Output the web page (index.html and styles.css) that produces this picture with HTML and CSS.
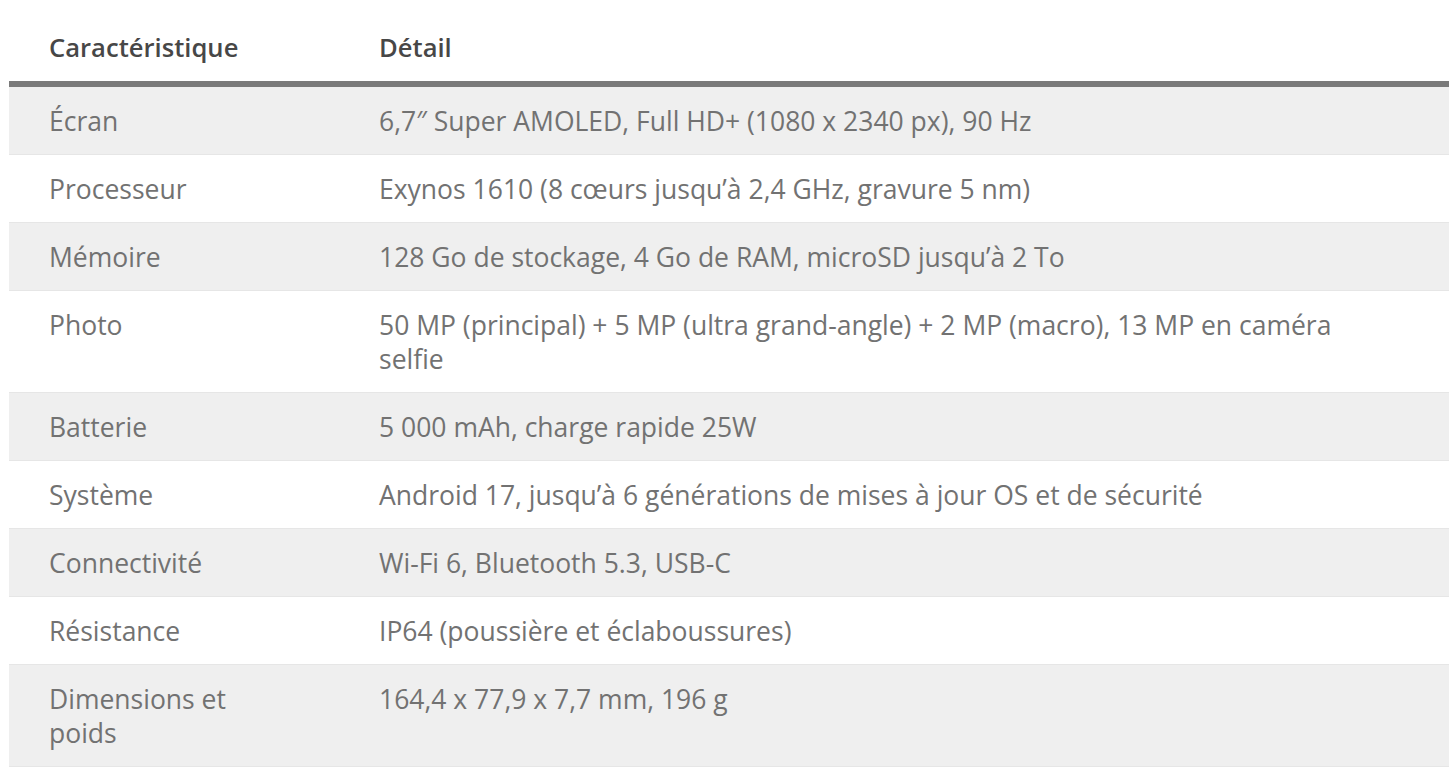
FILE: index.html
```html
<!DOCTYPE html>
<html lang="fr">
<head>
<meta charset="utf-8">
<title>Caractéristiques</title>
<link rel="stylesheet" href="styles.css">
</head>
<body>
<div class="wrap">
<table class="specs">
<thead>
<tr><th class="c1">Caractéristique</th><th class="c2">Détail</th></tr>
</thead>
<tbody>
<tr><td class="k">Écran</td><td class="v">6,7″ Super AMOLED, Full HD+ (1080 x 2340 px), 90 Hz</td></tr>
<tr><td class="k">Processeur</td><td class="v">Exynos 1610 (8 cœurs jusqu’à 2,4 GHz, gravure 5 nm)</td></tr>
<tr><td class="k">Mémoire</td><td class="v">128 Go de stockage, 4 Go de RAM, microSD jusqu’à 2 To</td></tr>
<tr><td class="k">Photo</td><td class="v">50 MP (principal) + 5 MP (ultra grand-angle) + 2 MP (macro), 13 MP en caméra selfie</td></tr>
<tr><td class="k">Batterie</td><td class="v">5 000 mAh, charge rapide 25W</td></tr>
<tr><td class="k">Système</td><td class="v">Android 17, jusqu’à 6 générations de mises à jour OS et de sécurité</td></tr>
<tr><td class="k">Connectivité</td><td class="v">Wi-Fi 6, Bluetooth 5.3, USB-C</td></tr>
<tr><td class="k">Résistance</td><td class="v">IP64 (poussière et éclaboussures)</td></tr>
<tr><td class="k">Dimensions et poids</td><td class="v">164,4 x 77,9 x 7,7 mm, 196 g</td></tr>
</tbody>
</table>
</div>
</body>
</html>
```
FILE: styles.css
```css
html, body {
  margin: 0;
  padding: 0;
  background: #ffffff;
}
.wrap {
  padding: 8px 0 0 9px;
}
.specs {
  width: 1440px;
  border-collapse: collapse;
  table-layout: fixed;
  font-family: "Open Sans", "Noto Sans", sans-serif;
  font-size: 26.5px;
  line-height: 34px;
}
.specs th {
  text-align: left;
  font-weight: 600;
  font-size: 25.6px;
  color: #474747;
  padding: 23px 70px 16px 40px;
  border-bottom: 6px solid #7a7a7a;
}
.specs th.c1 {
  width: 200px;
  padding-right: 90px;
}
.specs td {
  vertical-align: top;
  color: #727272;
  padding: 17px 70px 16px 40px;
  border-bottom: 1px solid #e6e6e6;
}
.specs td.k {
  padding-right: 90px;
}
.specs tbody tr:nth-child(odd) {
  background: #efefef;
}
```
